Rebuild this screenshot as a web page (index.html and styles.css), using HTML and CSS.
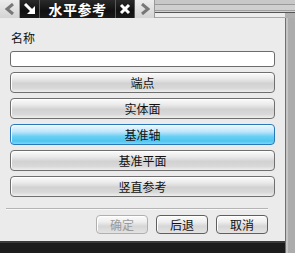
FILE: index.html
```html
<!DOCTYPE html>
<html lang="zh">
<head>
  <meta charset="UTF-8" />
  <title>水平参考</title>
  <link rel="stylesheet" href="styles.css">
</head>
<body>
  <div class="screen">
    <div class="tabbar">
      <div class="nav-btn">
        <svg width="10" height="12" viewBox="0 0 10 12"><path d="M8 1 L2 6 L8 11" fill="none" stroke="#777" stroke-width="3"/></svg>
      </div>
      <div class="tab tab-icon">
        <svg width="14" height="14" viewBox="0 0 14 14">
          <path d="M2 2 L9 9" stroke="#fff" stroke-width="3"/>
          <path d="M4 12 L12 12 L12 4 Z" fill="#fff"/>
        </svg>
      </div>
      <div class="tab tab-title">水平参考</div>
      <div class="tab tab-close">
        <svg width="12" height="12" viewBox="0 0 12 12"><path d="M2 2 L10 10 M10 2 L2 10" stroke="#fff" stroke-width="3"/></svg>
      </div>
      <div class="nav-btn">
        <svg width="10" height="12" viewBox="0 0 10 12"><path d="M2 1 L8 6 L2 11" fill="none" stroke="#777" stroke-width="3"/></svg>
      </div>
      <div class="tab-rest">
        <div class="stripes"></div>
        <div class="under"></div>
      </div>
    </div>

    <div class="main">
      <div class="column">
        <div class="panel">
          <div class="label">名称</div>
          <input class="name-input" type="text">
          <div class="choices">
            <button class="choice">端点</button>
            <button class="choice">实体面</button>
            <button class="choice selected">基准轴</button>
            <button class="choice">基准平面</button>
            <button class="choice">竖直参考</button>
          </div>
          <div class="separator"></div>
          <div class="actions">
            <button class="action" disabled>确定</button>
            <button class="action">后退</button>
            <button class="action">取消</button>
          </div>
        </div>
        <div class="taskbar"></div>
      </div>
      <div class="edge"></div>
    </div>
  </div>
</body>
</html>
```

FILE: styles.css
```css
body {
  margin: 0;
  font-family: "Noto Sans CJK SC", "Noto Sans", sans-serif;
  background-color: #b0b0b0;
}

.screen {
  width: 295px;
  height: 253px;
  display: flex;
  flex-direction: column;
  overflow: hidden;
}

/* tab strip */
.tabbar {
  height: 18px;
  display: flex;
  flex-shrink: 0;
}

.nav-btn {
  width: 19px;
  display: flex;
  align-items: center;
  justify-content: center;
  background: linear-gradient(#ececec, #d4d4d4);
  border-right: 1px solid #9a9a9a;
}

.tab {
  display: flex;
  align-items: center;
  justify-content: center;
  background: linear-gradient(#2a2a2a, #101010 60%, #1a1a1a);
  border-right: 1px solid #5a5a5a;
}

.tab-icon {
  width: 19px;
}

.tab-title {
  width: 75px;
  color: #fff;
  font-weight: 700;
  font-size: 14px;
  letter-spacing: 0.5px;
}

.tab-close {
  width: 18px;
}

.tab-rest {
  flex: 1;
  display: flex;
  flex-direction: column;
}

.stripes {
  height: 12px;
  background: linear-gradient(#c8c8c8 0, #c8c8c8 4px, #9a9a9a 4px, #9a9a9a 5px,
    #cfcfcf 5px, #cfcfcf 10px, #a0a0a0 10px, #a0a0a0 11px, #d0d0d0 11px);
  border-bottom: 1px solid #555;
}

.under {
  flex: 1;
  background-color: #ececec;
  border-bottom: 1px solid #a8a8a8;
  margin-right: 10px;
}

/* dialog body */
.main {
  flex: 1;
  display: flex;
}

.column {
  flex: 1;
  display: flex;
  flex-direction: column;
}

.panel {
  flex: 1;
  background-color: #ebebeb;
  padding: 12px 10px 0 10px;
}

.edge {
  width: 9px;
  background: linear-gradient(90deg, #c4c4c4 0, #c4c4c4 2px, #acacac 2px);
  border-left: 1px solid #6e6e6e;
}

.label {
  font-size: 12px;
  line-height: 16px;
  color: #111;
  margin-left: 1px;
}

.name-input {
  display: block;
  box-sizing: border-box;
  width: 265px;
  height: 16px;
  margin: 5px 0 0 0;
  padding: 0;
  border: 1px solid #6c6c6c;
  border-radius: 3px;
  background-color: #fff;
}

.choices {
  display: flex;
  flex-direction: column;
  gap: 5px;
  margin-top: 5px;
}

.choice {
  width: 265px;
  height: 21px;
  padding: 0;
  font-family: inherit;
  font-size: 12px;
  color: #111;
  border: 1px solid #6f6f6f;
  border-radius: 4px;
  background: linear-gradient(#fbfbfb 0%, #eaeaea 30%, #d2d2d2 55%, #d8d8d8 80%, #eeeeee 100%);
  box-shadow: inset 1px 1px 0 #fff;
}

.choice.selected {
  border-color: #2a78b8;
  background: linear-gradient(#eef8ff 0%, #bfe6fb 35%, #6ccff4 60%, #4ec6f2 85%, #7dd6f6 100%);
}

.separator {
  height: 1px;
  background-color: #b4b4b4;
  margin: 11px 7px 0 -4px;
  border-bottom: 1px solid #f8f8f8;
}

.actions {
  display: flex;
  justify-content: flex-end;
  gap: 8px;
  margin-top: 5px;
  padding-right: 7px;
}

.action {
  width: 52px;
  height: 19px;
  padding: 0;
  font-family: inherit;
  font-size: 12px;
  color: #111;
  border: 1px solid #5f5f5f;
  border-radius: 4px;
  background: linear-gradient(#fbfbfb 0%, #eeeeee 35%, #d6d6d6 60%, #e2e2e2 100%);
  box-shadow: inset 1px 1px 0 #fff;
}

.action:disabled {
  color: #9a9a9a;
  border-color: #b0b0b0;
}

.taskbar {
  height: 10px;
  flex-shrink: 0;
  background-color: #1c1c1c;
  border-top: 2px solid #3a3a3a;
}
```
